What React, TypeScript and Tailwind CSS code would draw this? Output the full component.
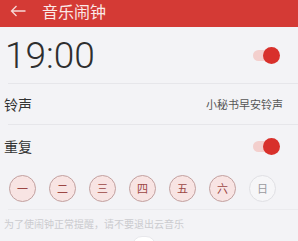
const days = ['一', '二', '三', '四', '五', '六', '日'];

const Toggle = () => (
  <div className="relative h-[17px] w-[27px]">
    <div className="absolute left-0 top-[3px] h-[11px] w-[22px] rounded-full bg-[#f3cfcd]" />
    <div className="absolute right-0 top-0 h-[17px] w-[17px] rounded-full bg-[#d8302b]" />
  </div>
);

const App = () => {
  return (
    <div
      className="relative h-[241px] w-[298px] overflow-hidden bg-[#f3f3f6]"
      style={{ fontFamily: '"Noto Sans CJK SC", Roboto, sans-serif' }}
    >
      {/* header */}
      <div className="flex h-[27px] items-start bg-[#d43a35] pl-[10px] text-white">
        <svg className="mt-[5px]" width="16" height="12" viewBox="0 0 16 12" fill="none" stroke="#f6d9d8" strokeWidth="1.3">
          <path d="M15.5 6H1.5M6.5 1L1.5 6l5 5" />
        </svg>
        <span className="ml-[16px] text-[16px] leading-[23px] text-[#fbe9e8]">音乐闹钟</span>
      </div>

      {/* time */}
      <div className="flex h-[56px] items-center justify-between pl-[5px] pr-[18px]">
        <span
          className="text-[37px] font-light leading-none text-[#2e2e2e]"
          style={{ fontFamily: 'Roboto, sans-serif' }}
        >
          19:00
        </span>
        <Toggle />
      </div>
      <div className="ml-[8px] h-px bg-[#e6e6ea]" />

      {/* ringtone */}
      <div className="flex h-[40px] items-center justify-between pl-[4px] pr-[15px]">
        <span className="text-[14px] text-[#333]">铃声</span>
        <span className="text-[11px] text-[#555]">小秘书早安铃声</span>
      </div>
      <div className="ml-[8px] h-px bg-[#e6e6ea]" />

      {/* repeat */}
      <div className="flex h-[42px] items-center justify-between pl-[4px] pr-[18px]">
        <span className="text-[14px] text-[#333]">重复</span>
        <Toggle />
      </div>

      {/* days */}
      <div className="flex h-[42px] items-center gap-[13px] pl-[9px]">
        {days.map((d, i) => (
          <div
            key={d}
            className={
              i < 6
                ? 'flex h-[27px] w-[27px] items-center justify-center rounded-full border border-[#c2a09f] bg-[#f8e4e3] text-[11px] text-[#9c4644]'
                : 'flex h-[27px] w-[27px] items-center justify-center rounded-full border border-[#e0e0e4] bg-[#f6f6f8] text-[11px] text-[#9a9a9e]'
            }
          >
            {d}
          </div>
        ))}
      </div>
      <div className="ml-[8px] h-px bg-[#ebebee]" />

      {/* hint */}
      <div className="pl-[4px] pt-[6px] text-[10px] text-[#cbcbcf]">
        为了使闹钟正常提醒，请不要退出云音乐
      </div>

      {/* partially visible button at bottom edge */}
      <div className="absolute left-[132px] top-[236px] h-[20px] w-[24px] rounded-full border border-[#e8e8ec] bg-white" />
    </div>
  );
};

export default App;
